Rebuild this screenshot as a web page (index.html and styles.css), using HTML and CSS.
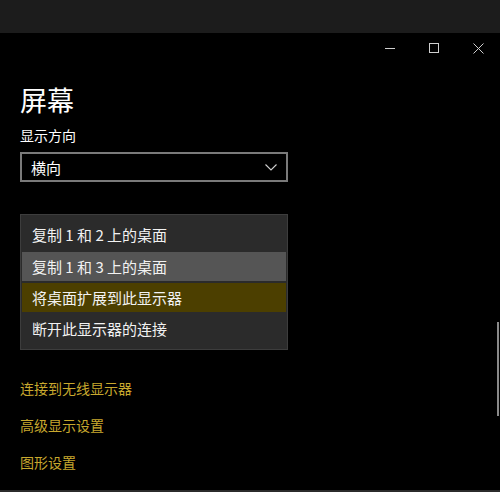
FILE: index.html
```html
<!DOCTYPE html>
<html lang="zh-CN">
<head>
  <meta charset="UTF-8">
  <title>屏幕</title>
  <link rel="stylesheet" href="styles.css">
</head>
<body>

<div class="titlebar"></div>

<div class="window-controls">
  <button class="ctrl" aria-label="最小化">
    <svg width="10" height="10" viewBox="0 0 10 10"><path d="M0 5.5h10" stroke="#cfcfcf" stroke-width="1"/></svg>
  </button>
  <button class="ctrl" aria-label="最大化">
    <svg width="10" height="10" viewBox="0 0 10 10"><rect x="0.5" y="0.5" width="9" height="9" fill="none" stroke="#cfcfcf" stroke-width="1"/></svg>
  </button>
  <button class="ctrl" aria-label="关闭">
    <svg width="11" height="11" viewBox="0 0 11 11"><path d="M0.5 0.5l10 10M10.5 0.5l-10 10" stroke="#cfcfcf" stroke-width="1"/></svg>
  </button>
</div>

<main class="page">
  <h1 class="page-title">屏幕</h1>
  <div class="label">显示方向</div>

  <div class="select">
    <span>横向</span>
    <svg class="chevron" width="12" height="7" viewBox="0 0 12 7"><path d="M0.5 0.5l5.5 5.5 5.5-5.5" fill="none" stroke="#d0d0d0" stroke-width="1.1"/></svg>
  </div>

  <ul class="menu">
    <li class="menu-item">复制 1 和 2 上的桌面</li>
    <li class="menu-item hover">复制 1 和 3 上的桌面</li>
    <li class="menu-item selected">将桌面扩展到此显示器</li>
    <li class="menu-item">断开此显示器的连接</li>
  </ul>

  <nav class="links">
    <a href="#">连接到无线显示器</a>
    <a href="#">高级显示设置</a>
    <a href="#">图形设置</a>
  </nav>
</main>

<div class="scrollbar"></div>
<div class="bottom-edge"></div>

</body>
</html>
```

FILE: styles.css
```css
* { box-sizing: border-box; }

html, body {
  margin: 0;
  padding: 0;
  width: 100%;
  height: 100%;
  background: #000;
  color: #fff;
  font-family: "Noto Sans CJK SC", "Noto Sans", sans-serif;
  overflow: hidden;
}

body { position: relative; }

.titlebar {
  height: 33px;
  background: #1c1c1c;
}

.window-controls {
  display: flex;
  justify-content: flex-end;
  height: 30px;
}

.ctrl {
  width: 44px;
  height: 30px;
  padding: 0;
  border: 0;
  background: transparent;
  display: flex;
  align-items: center;
  justify-content: center;
}

.page {
  padding: 0 20px;
}

.page-title {
  margin: 19px 0 0;
  font-size: 27px;
  font-weight: 400;
  line-height: 36px;
}

.label {
  margin-top: 7px;
  font-size: 14px;
  line-height: 20px;
}

.select {
  margin-top: 7px;
  width: 268px;
  height: 30px;
  border: 2px solid #7a7a7a;
  display: flex;
  align-items: center;
  justify-content: space-between;
  padding: 0 9px 0 9px;
  font-size: 15px;
}

.chevron { margin-top: 1px; }

.menu {
  list-style: none;
  margin: 32px 0 0;
  width: 268px;
  padding: 5px 1px 6px;
  background: #2b2b2b;
  border: 1px solid #3d3d3d;
}

.menu-item {
  height: 29px;
  line-height: 29px;
  margin-bottom: 2px;
  padding-left: 10px;
  font-size: 15px;
  color: #f2f2f2;
}

.menu-item:first-child { margin-bottom: 3px; }
.menu-item:last-child { margin-bottom: 0; }

.menu-item.hover { background: #555; }
.menu-item.selected { background: #4c3f00; }

.links {
  display: flex;
  flex-direction: column;
  gap: 17px;
  margin-top: 28px;
}

.links a {
  font-size: 14px;
  line-height: 20px;
  color: #c8a82e;
  text-decoration: none;
}

.scrollbar {
  position: absolute;
  right: 1px;
  top: 322px;
  width: 2px;
  height: 94px;
  background: #8a8a8a;
}

.bottom-edge {
  position: absolute;
  left: 0;
  right: 0;
  bottom: 0;
  height: 2px;
  background: #2b2b2b;
}
```
